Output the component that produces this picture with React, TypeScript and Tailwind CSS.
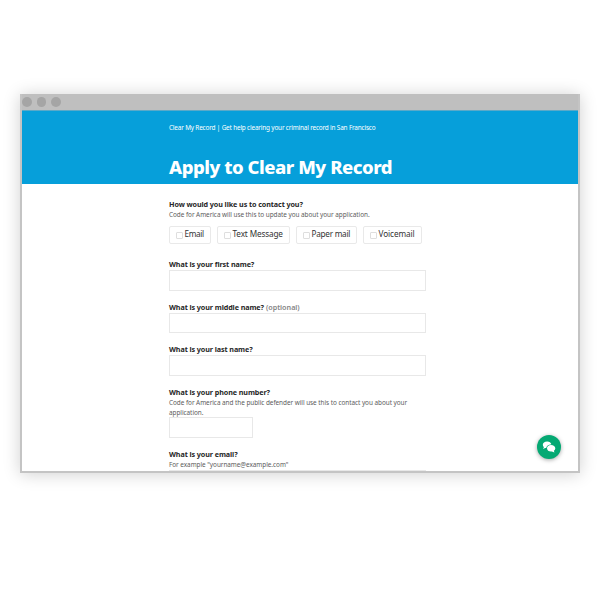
import React from "react";

function Choice({ label, width, text }: { label: string; width: string; text: string }) {
  return (
    <label className={`flex h-[18px] items-center rounded-[2px] border border-[#e9e9e9] pl-[6px] ${width}`}>
      <span className="mt-px mr-[1.5px] h-[7px] w-[7px] shrink-0 rounded-[1px] border border-[#dedede]" />
      <span className={`-mt-[2px] whitespace-nowrap text-[8.2px] leading-[14px] text-[#333] ${text}`}>{label}</span>
    </label>
  );
}

function Question({ text, className = "" }: { text: string; className?: string }) {
  return <div className={`h-[11px] shrink-0 whitespace-nowrap text-[7.2px] leading-[11px] font-bold tracking-[-0.09px] text-[#262626] ${className}`}>{text}</div>;
}

function Hint({ children, className = "leading-[9.5px]" }: { children: React.ReactNode; className?: string }) {
  return <div className={`shrink-0 whitespace-nowrap text-[6.4px] tracking-[-0.04px] text-[#5c5c5c] ${className}`}>{children}</div>;
}

function Field({ width = "w-[257px]" }: { width?: string }) {
  return <div className={`h-[20.5px] shrink-0 border border-[#e8e8e8] bg-white ${width}`} />;
}

export default function App() {
  return (
    <div className="h-[600px] w-[600px] overflow-hidden bg-white px-5 pt-[94px] font-['Noto_Sans','Open_Sans',sans-serif]">
      <div className="relative flex h-[378.5px] w-[560px] flex-col border-2 border-t-0 border-[#c4c4c4] bg-white shadow-[0_1px_16px_rgba(0,0,0,0.19)]">
        <div className="flex h-4 shrink-0 items-center gap-[5px] bg-[#bfbfbf]">
          <span className="h-[9.5px] w-[9.5px] rounded-full bg-[#a5a5a5]" />
          <span className="h-[9.5px] w-[9.5px] rounded-full bg-[#a5a5a5]" />
          <span className="h-[9.5px] w-[9.5px] rounded-full bg-[#a5a5a5]" />
        </div>
        <header className="h-[74px] shrink-0 border-t border-[#5aa9c8] bg-[#069fda] pl-[147px] text-white">
          <div className="mt-[11px] h-[11px] whitespace-nowrap text-[6.4px] leading-[11px] tracking-[-0.17px]">Clear My Record | Get help clearing your criminal record in San Francisco</div>
          <h1 className="mt-[22px] h-6 whitespace-nowrap text-[18.5px] leading-6 font-extrabold tracking-[-0.47px]">Apply to Clear My Record</h1>
        </header>
        <main className="flex min-h-0 flex-1 flex-col overflow-hidden pl-[147px]">
          <Question text="How would you like us to contact you?" className="mt-[15px]" />
          <Hint className="leading-[10.5px]">Code for America will use this to update you about your application.</Hint>
          <div className="mt-[5.5px] flex h-[18px] shrink-0">
            <Choice label="Email" width="mr-[6px] w-[42px]" text="tracking-[-0.35px]" />
            <Choice label="Text Message" width="mr-[6px] w-[73px]" text="tracking-[-0.14px]" />
            <Choice label="Paper mail" width="mr-[6px] w-[61px]" text="tracking-[-0.25px]" />
            <Choice label="Voicemail" width="w-[59px]" text="tracking-[-0.08px]" />
          </div>
          <Question text="What is your first name?" className="mt-[15px]" />
          <Field />
          <div className="mt-[11.2px] flex shrink-0 gap-[2px]">
            <Question text="What is your middle name?" />
            <span className="text-[7.2px] leading-[11px] font-semibold text-[#858585]">(optional)</span>
          </div>
          <Field />
          <Question text="What is your last name?" className="mt-[11.2px]" />
          <Field />
          <Question text="What is your phone number?" className="mt-[11.2px]" />
          <Hint>Code for America and the public defender will use this to contact you about your<br />application.</Hint>
          <Field width="w-[84px]" />
          <Question text="What is your email?" className="mt-[11.2px]" />
          <Hint className="leading-[10.5px]">For example "yourname@example.com"</Hint>
          <Field />
        </main>
        <button className="absolute right-[17px] bottom-[12px] flex h-6 w-6 items-center justify-center rounded-full bg-[#05a973] shadow-[0_1px_4px_rgba(0,0,0,0.35)]">
          <svg width="14" height="12" viewBox="0 0 14 12" fill="#fff">
            <path d="M5.2.4C2.6.4.8 1.9.8 3.8c0 1 .4 1.800 1.100 2.400L1 8l2.200-.9h1C4.300 4.900 6.400 3.400 9.400 3.200 9 1.500 7.400.4 5.200.4Z" />
            <path d="M9 3.900c-2.300 0-4 1.300-4 3.300s1.700 3.300 4 3.300h.9l2.500 1-.5-1.800c.8-.6 1.400-1.500 1.400-2.500 0-2-1.900-3.300-4.300-3.300Z" />
          </svg>
        </button>
      </div>
    </div>
  );
}
